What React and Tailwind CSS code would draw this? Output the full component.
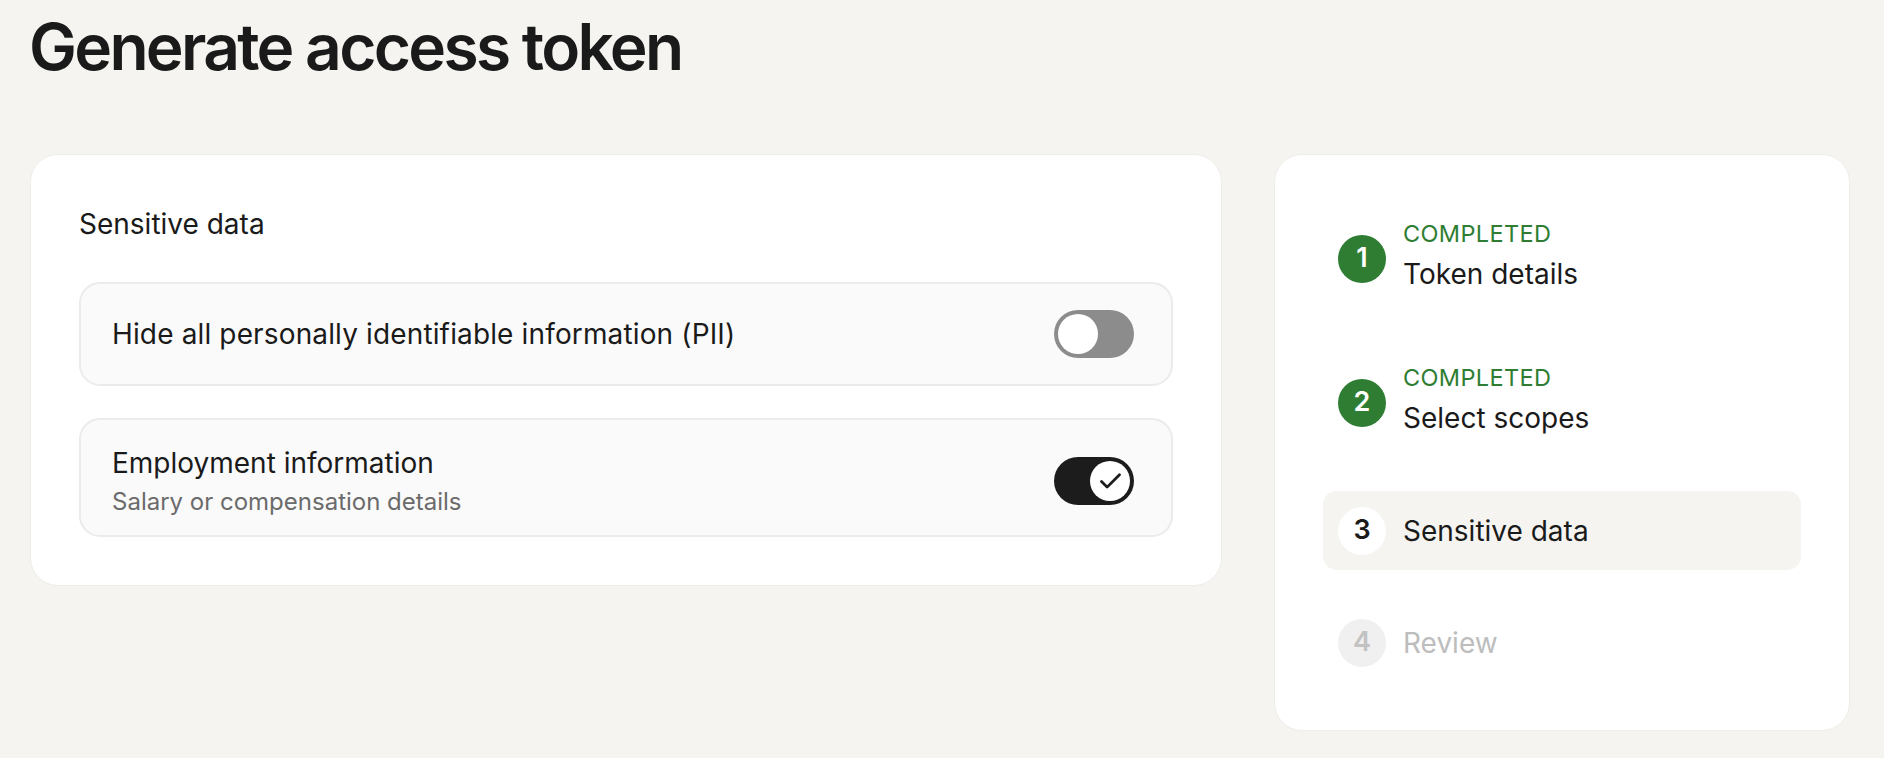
import { Check } from "lucide-react";

// Toggle switch drawn as track + thumb
const Toggle = ({ on }) => (
  <div
    className={
      "flex h-[48px] w-[80px] shrink-0 items-center rounded-full p-[4px] " +
      (on ? "justify-end bg-[#1c1c1c]" : "justify-start bg-[#8c8c8c]")
    }
  >
    <div className="flex h-[40px] w-[40px] items-center justify-center rounded-full bg-white">
      {on && <Check size={27} strokeWidth={2.5} className="text-[#1c1c1c]" />}
    </div>
  </div>
);

const steps = [
  { n: 1, label: "Token details", state: "done" },
  { n: 2, label: "Select scopes", state: "done" },
  { n: 3, label: "Sensitive data", state: "active" },
  { n: 4, label: "Review", state: "todo" },
];

const Step = ({ n, label, state }) => {
  const circle =
    state === "done"
      ? "bg-[#2e7d32] text-white"
      : state === "active"
      ? "bg-white text-[#1a1a1a]"
      : "bg-[#f0f0f0] text-[#c2c2c2]";

  return (
    <div
      className={
        "flex items-center gap-[17px] rounded-[14px] px-[15px] py-[15.5px] " +
        (state === "active" ? "bg-[#f5f4f0]" : "")
      }
    >
      <div
        className={
          "flex h-[48px] w-[48px] shrink-0 items-center justify-center rounded-full text-[27px] font-semibold " +
          circle
        }
      >
        {n}
      </div>
      <div className="flex flex-col">
        {state === "done" && (
          <span className="text-[23.5px] leading-[30px] tracking-[0.015em] text-[#2e7d32]">COMPLETED</span>
        )}
        <span
          className={
            "text-[28px] " +
            (state === "done" ? "leading-[50px] " : "leading-[40px] ") +
            (state === "todo" ? "text-[#bdbdbd]" : "text-[#1a1a1a]")
          }
        >
          {label}
        </span>
      </div>
    </div>
  );
};

export default function App() {
  return (
    <div className="min-h-screen bg-[#f5f4f0] pl-[30px] pr-[34px] pt-[15px] font-['Inter',sans-serif] text-[#1a1a1a]">
      <h1 className="-ml-[1px] text-[64px] font-semibold leading-none tracking-[-0.042em] text-[#1a1a1a]">
        Generate access token
      </h1>

      <div className="mt-[75px] flex items-start gap-[52px]">
        {/* Main card */}
        <div className="flex-1 rounded-[28px] border border-[#eeede9] bg-white p-[48px]">
          <div className="text-[28px] font-normal leading-[42px]">Sensitive data</div>

          <div className="mt-[37px] flex flex-col gap-[32px]">
            <div className="flex items-center justify-between rounded-[21px] border-2 border-[#ebebeb] bg-[#fafafa] py-[26px] pl-[31px] pr-[37px]">
              <span className="text-[28px] leading-[34px] tracking-[0.005em]">
                Hide all personally identifiable information (PII)
              </span>
              <Toggle on={false} />
            </div>

            <div className="flex items-center justify-between rounded-[21px] border-2 border-[#ebebeb] bg-[#fafafa] pb-[19px] pl-[31px] pr-[37px] pt-[26px]">
              <div className="flex flex-col">
                <span className="text-[28px] leading-[34px]">Employment information</span>
                <span className="mt-[7px] text-[24px] leading-[29px] text-[#6b6b6b]">
                  Salary or compensation details
                </span>
              </div>
              <Toggle on={true} />
            </div>
          </div>
        </div>

        {/* Progress card */}
        <div className="flex w-[576px] flex-col gap-[33px] rounded-[28px] border border-[#eeede9] bg-white p-[48px]">
          {steps.map((s) => (
            <Step key={s.n} {...s} />
          ))}
        </div>
      </div>
    </div>
  );
}
